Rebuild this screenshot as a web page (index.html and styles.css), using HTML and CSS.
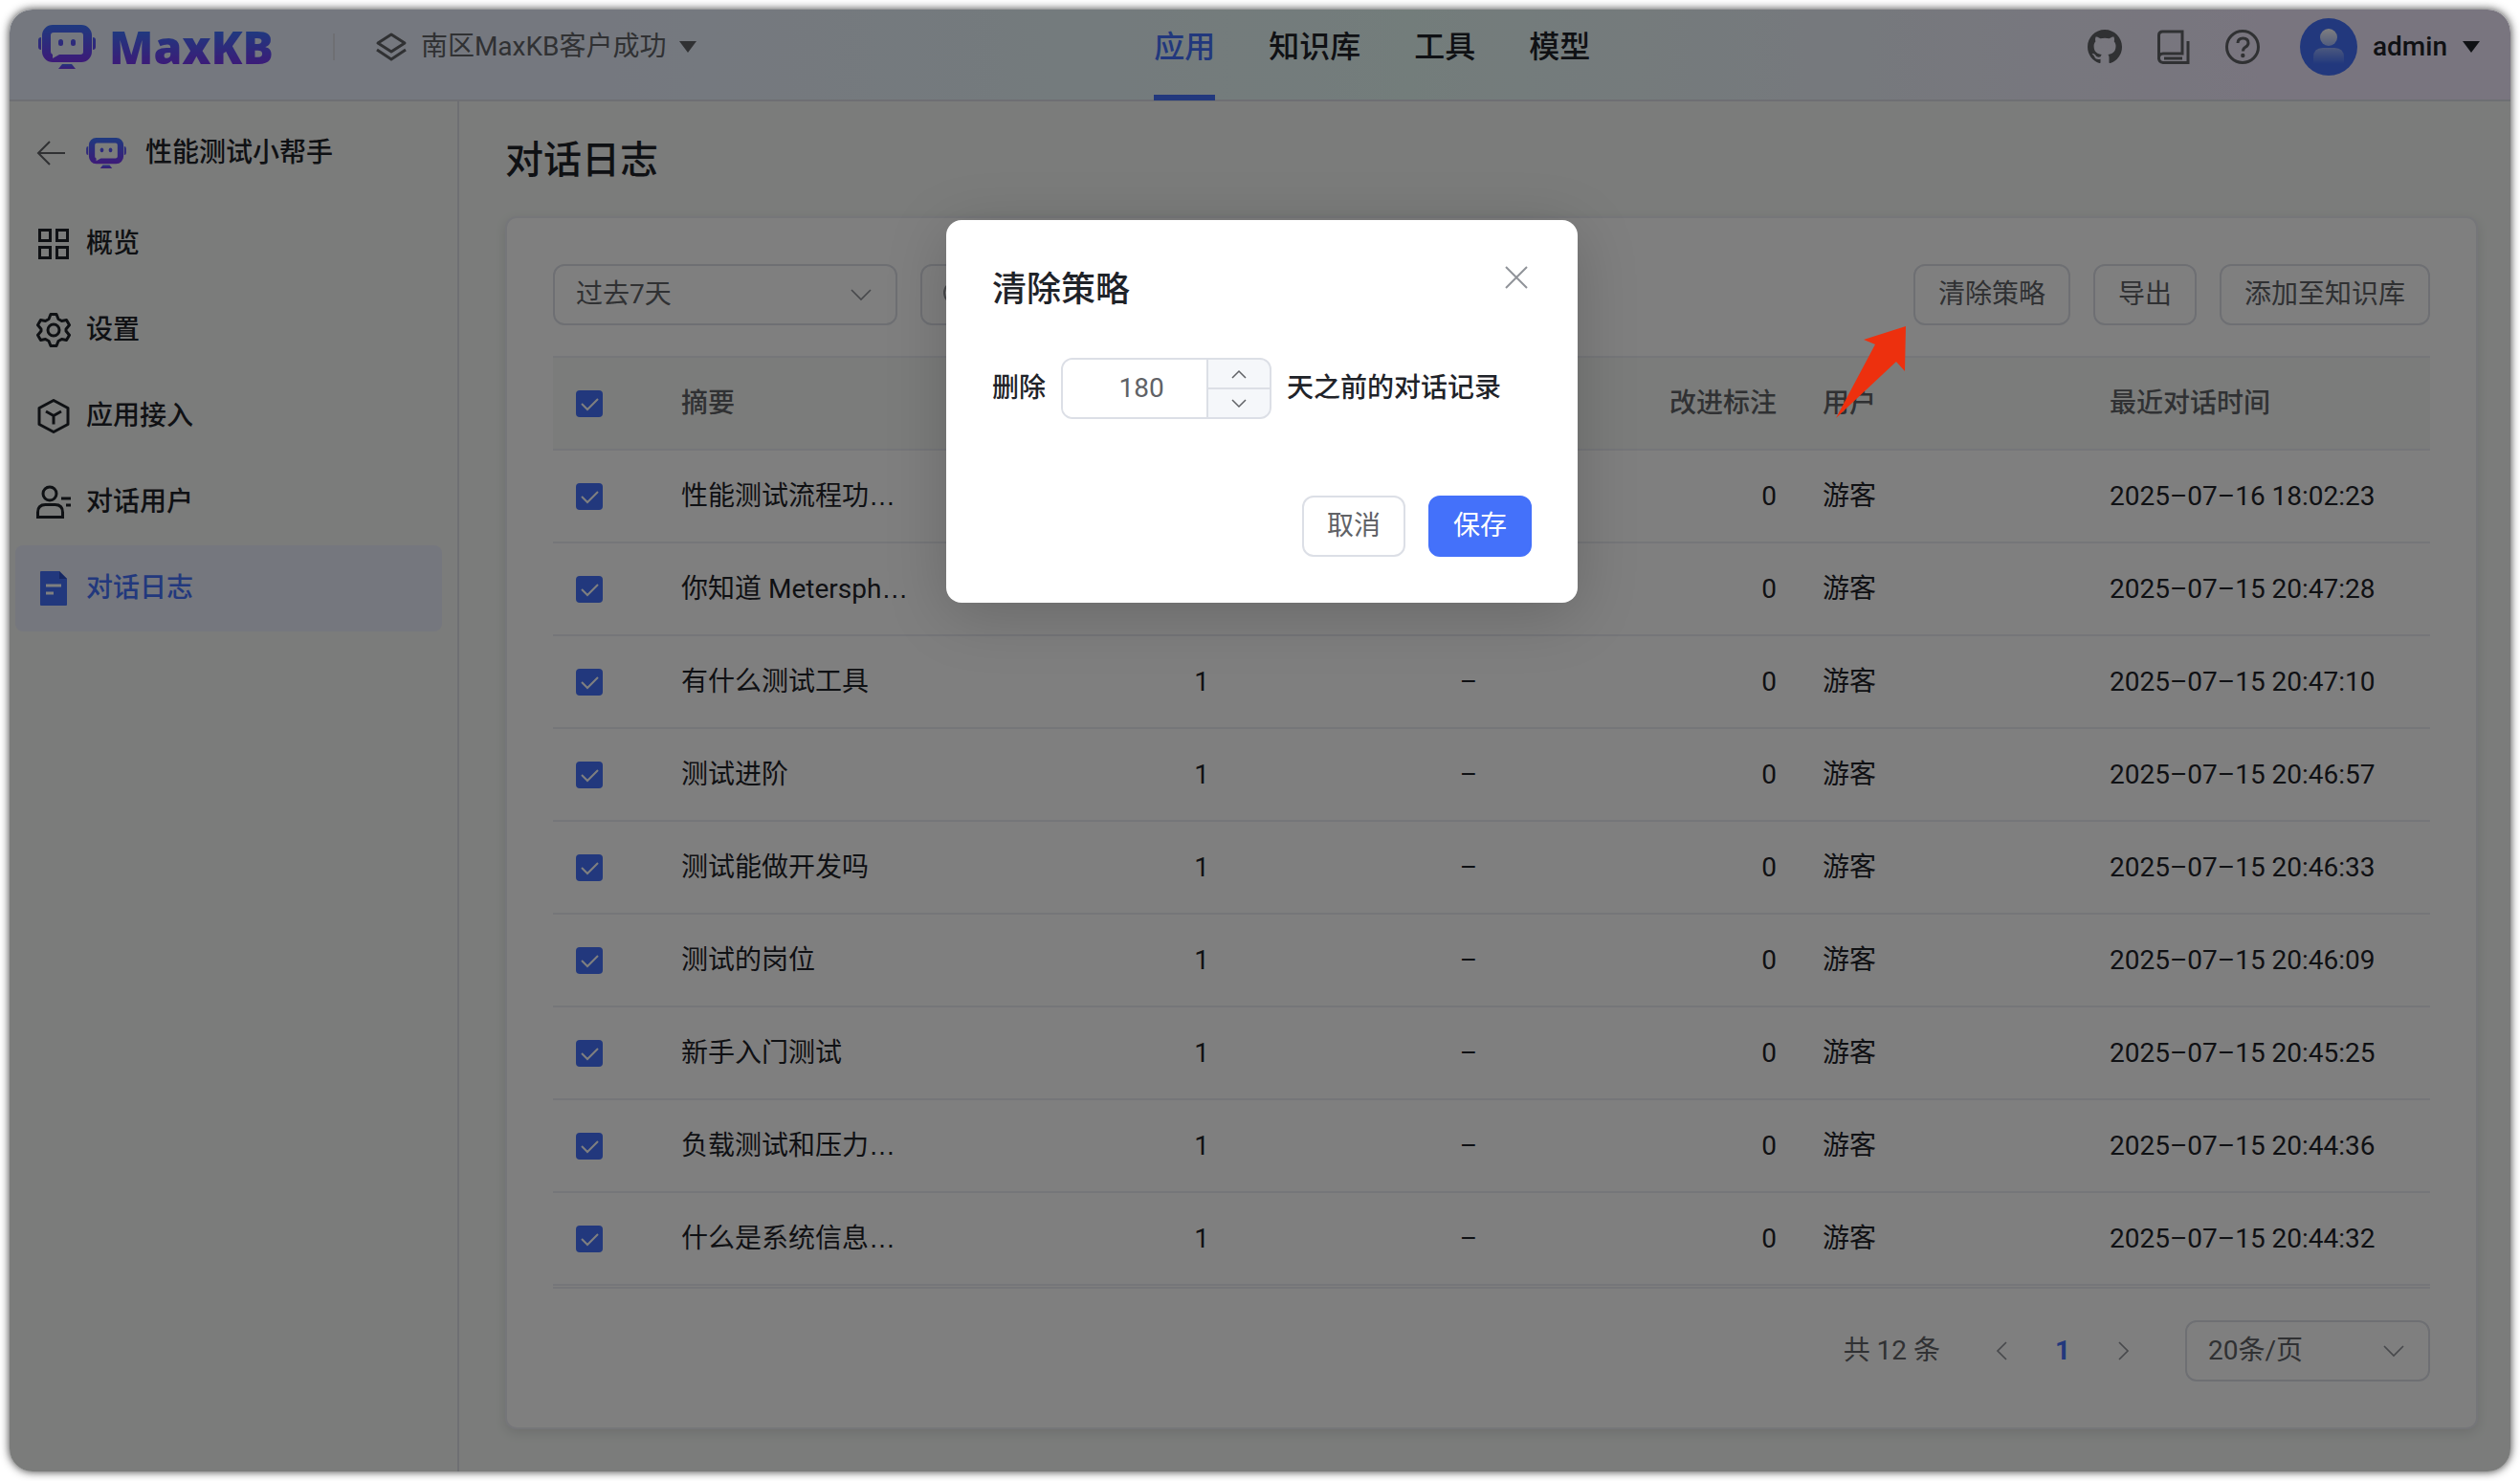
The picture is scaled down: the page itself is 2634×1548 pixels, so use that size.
FILE: index.html
```html
<!DOCTYPE html>
<html lang="zh-CN">
<head>
<meta charset="utf-8">
<title>MaxKB - 对话日志</title>
<link rel="stylesheet" href="styles.css">
</head>
<body>
<svg class="defs" aria-hidden="true">
  <defs>
    <linearGradient id="brand" x1="0" y1="0" x2="0" y2="46" gradientUnits="userSpaceOnUse">
      <stop offset="0" stop-color="#3f74ff"/>
      <stop offset="0.85" stop-color="#7a35f0"/>
    </linearGradient>
    <linearGradient id="base" x1="0" y1="40" x2="0" y2="46" gradientUnits="userSpaceOnUse">
      <stop offset="0" stop-color="#3f74ff"/>
      <stop offset="1" stop-color="#7a35f0"/>
    </linearGradient>
    <linearGradient id="person" x1="0" y1="0" x2="0" y2="1">
      <stop offset="0" stop-color="#fff"/>
      <stop offset="1" stop-color="#fff" stop-opacity="0.5"/>
    </linearGradient>
    <linearGradient id="shoulders" x1="0" y1="0" x2="0" y2="1">
      <stop offset="0" stop-color="#fff" stop-opacity="0.45"/>
      <stop offset="1" stop-color="#fff" stop-opacity="0"/>
    </linearGradient>
    <symbol id="robot" viewBox="0 0 60 46">
      <path fill="url(#brand)" fill-rule="evenodd" d="M15 0h30a11 11 0 0 1 11 11v17a11 11 0 0 1-11 11H15A11 11 0 0 1 4 28V11A11 11 0 0 1 15 0zM16 8q-3 0-3 3v17q0 2 2 3v4l7-4h22q3 0 3-3V11q0-3-3-3z"/>
      <rect fill="url(#brand)" x="21" y="15" width="5" height="7" rx="2.500"/>
      <rect fill="url(#brand)" x="34" y="15" width="5" height="7" rx="2.500"/>
      <path fill="url(#brand)" d="M3 13v13Q0 26 0 23v-7q0-3 3-3zM57 13v13q3 0 3-3v-7q0-3-3-3z"/>
      <path fill="url(#base)" d="M25 41h10l4 5H21z"/>
    </symbol>
    <symbol id="down" viewBox="0 0 24 24">
      <path d="M2 7l10 10L22 7" fill="none" stroke="currentColor" stroke-width="1.700"/>
    </symbol>
  </defs>
</svg>

<div class="window">
  <header class="topbar">
    <div class="topbar-left">
      <a class="brand" href="#"><svg class="brand-icon" aria-hidden="true"><use href="#robot"/></svg><span class="brand-name">MaxKB</span></a>
      <button class="workspace" type="button">
        <svg class="workspace-icon" viewBox="0 0 34 30" fill="none" stroke="currentColor" stroke-width="3" aria-hidden="true"><path d="M17 2L31 11 17 20 3 11z" stroke-linejoin="round"/><path d="M2 18l15 10 15-10"/></svg>
        <span>南区MaxKB客户成功</span>
        <svg class="caret" viewBox="0 0 18 12" aria-hidden="true"><path d="M0 0h18L9 12z" fill="currentColor"/></svg>
      </button>
    </div>
    <nav class="topnav">
      <a class="topnav-link is-active" href="#">应用</a>
      <a class="topnav-link" href="#">知识库</a>
      <a class="topnav-link" href="#">工具</a>
      <a class="topnav-link" href="#">模型</a>
    </nav>
    <div class="topbar-right">
      <a class="tool-link" href="#" aria-label="GitHub"><svg viewBox="0 0 16 16"><path fill="currentColor" d="M8 0C3.580 0 0 3.580 0 8c0 3.540 2.290 6.530 5.470 7.590.4.070.55-.17.55-.38 0-.19-.01-.82-.01-1.490-2.010.37-2.530-.49-2.690-.94-.09-.23-.48-.94-.82-1.130-.28-.15-.68-.52-.01-.53.63-.01 1.080.58 1.230.82.72 1.210 1.870.87 2.330.66.07-.52.28-.87.51-1.070-1.780-.2-3.640-.89-3.640-3.950 0-.87.31-1.590.82-2.150-.08-.2-.36-1.020.08-2.120 0 0 .67-.21 2.200.82.64-.18 1.320-.27 2-.27.68 0 1.360.09 2 .27 1.530-1.040 2.200-.82 2.200-.82.44 1.100.16 1.920.08 2.120.51.56.82 1.270.82 2.150 0 3.070-1.870 3.750-3.650 3.950.29.25.54.73.54 1.480 0 1.070-.01 1.930-.01 2.200 0 .21.15.46.55.38A8.013 8.013 0 0016 8c0-4.420-3.580-8-8-8z"/></svg></a>
      <a class="tool-link" href="#" aria-label="文档"><svg viewBox="0 0 36 36" fill="none" stroke="currentColor" stroke-width="3"><path d="M2.500 31V6q0-4 4-4H27v23H7q-4.500 0-4.500 4.500T7 34.500h26V12"/><path d="M8 30h19"/></svg></a>
      <a class="tool-link" href="#" aria-label="帮助"><svg viewBox="0 0 36 36" fill="none" stroke="currentColor" stroke-width="3"><circle cx="18" cy="18" r="16.500"/><path d="M13 14q0-5 5.500-5t5.500 5q0 2.500-3 4.300-2.500 1.500-2.500 4.200"/><circle cx="18.300" cy="27" r="2.200" fill="currentColor" stroke="none"/></svg></a>
      <button class="account" type="button">
        <svg class="avatar" viewBox="0 0 60 60" aria-hidden="true"><circle cx="30" cy="30" r="30" fill="#4471fa"/><circle cx="30" cy="20" r="9" fill="url(#person)"/><path d="M14 48v-7q0-10 10-10h12q10 0 10 10v7z" fill="url(#shoulders)"/></svg>
        <span>admin</span>
        <svg class="caret" viewBox="0 0 18 12" aria-hidden="true"><path d="M0 0h18L9 12z" fill="currentColor"/></svg>
      </button>
    </div>
  </header>

  <div class="body">
    <aside class="sidebar">
      <div class="app-head">
        <a class="back" href="#" aria-label="返回"><svg viewBox="0 0 30 28" fill="none" stroke="currentColor" stroke-width="2"><path d="M14 2L2 14l12 12M2 14h28"/></svg></a>
        <svg class="app-icon" aria-hidden="true"><use href="#robot"/></svg>
        <span>性能测试小帮手</span>
      </div>
      <nav class="menu">
        <a class="menu-item" href="#"><svg viewBox="0 0 36 36" fill="none" stroke="currentColor" stroke-width="3"><path d="M3.500 3.500h11v11h-11zM21.500 3.500h11v11h-11zM3.500 21.500h11v11h-11zM21.500 21.500h11v11h-11z"/></svg>概览</a>
        <a class="menu-item" href="#"><svg viewBox="0 0 36 36" fill="none" stroke="currentColor" stroke-width="3" stroke-linejoin="round"><path d="M15 1.500h6l2 5 3.500 2 5-1 3 5.300L31 17v2l3.500 4.200-3 5.300-5-1-3.500 2-2 5h-6l-2-5-3.500-2-5 1-3-5.300L5 19v-2l-3.500-4.200 3-5.300 5 1 3.500-2z"/><circle cx="18" cy="18" r="6"/></svg>设置</a>
        <a class="menu-item" href="#"><svg viewBox="0 0 36 36" fill="none" stroke="currentColor" stroke-width="3" stroke-linejoin="round"><path d="M18 1.500L33 9.500v17l-15 8-15-8v-17z"/><path d="M10 13l8 4.500 8-4.500M18 17.500v9"/></svg>应用接入</a>
        <a class="menu-item" href="#"><svg viewBox="0 0 36 36" fill="none" stroke="currentColor" stroke-width="3"><circle cx="14" cy="9" r="7"/><path d="M1.500 33.500v-5q0-8 8-8h10q8 0 8 8v5zM26 14h10M31 21h5"/></svg>对话用户</a>
        <a class="menu-item is-active" href="#"><svg viewBox="0 0 36 36"><path fill="currentColor" d="M5 0h19l8 8v27q0 1-1 1H5q-1 0-1-1V1q0-1 1-1z"/><path fill="#2b4fc4" d="M24 0v8h8z"/><path d="M10 15h16M10 23h8" stroke="#fff" stroke-width="3"/></svg>对话日志</a>
      </nav>
    </aside>

    <main class="main">
      <h1 class="page-title">对话日志</h1>
      <section class="card">
        <div class="toolbar">
          <div class="select range"><select aria-label="时间范围"><option>过去7天</option></select><svg aria-hidden="true"><use href="#down"/></svg></div>
          <label class="search"><svg viewBox="0 0 28 28" fill="none" stroke="currentColor" stroke-width="2" aria-hidden="true"><circle cx="12" cy="12" r="11"/><path d="M20 20l7 7"/></svg><input type="text" aria-label="搜索"></label>
          <div class="actions">
            <button class="btn" type="button">清除策略</button>
            <button class="btn" type="button">导出</button>
            <button class="btn" type="button">添加至知识库</button>
          </div>
        </div>

        <table class="log">
          <colgroup><col class="c-check"><col class="c-summary"><col class="c-count"><col class="c-vote"><col class="c-mark"><col class="c-user"><col></colgroup>
          <thead>
            <tr><th><input type="checkbox" aria-label="全选" checked></th><th>摘要</th><th class="num"></th><th class="num"></th><th class="num">改进标注</th><th>用户</th><th>最近对话时间</th></tr>
          </thead>
          <tbody>
            <tr><td><input type="checkbox" aria-label="选择" checked></td><td>性能测试流程功<span class="more">…</span></td><td class="num">1</td><td class="num">–</td><td class="num">0</td><td>游客</td><td>2025–07–16 18:02:23</td></tr>
            <tr><td><input type="checkbox" aria-label="选择" checked></td><td>你知道 Metersph<span class="more">…</span></td><td class="num">1</td><td class="num">–</td><td class="num">0</td><td>游客</td><td>2025–07–15 20:47:28</td></tr>
            <tr><td><input type="checkbox" aria-label="选择" checked></td><td>有什么测试工具</td><td class="num">1</td><td class="num">–</td><td class="num">0</td><td>游客</td><td>2025–07–15 20:47:10</td></tr>
            <tr><td><input type="checkbox" aria-label="选择" checked></td><td>测试进阶</td><td class="num">1</td><td class="num">–</td><td class="num">0</td><td>游客</td><td>2025–07–15 20:46:57</td></tr>
            <tr><td><input type="checkbox" aria-label="选择" checked></td><td>测试能做开发吗</td><td class="num">1</td><td class="num">–</td><td class="num">0</td><td>游客</td><td>2025–07–15 20:46:33</td></tr>
            <tr><td><input type="checkbox" aria-label="选择" checked></td><td>测试的岗位</td><td class="num">1</td><td class="num">–</td><td class="num">0</td><td>游客</td><td>2025–07–15 20:46:09</td></tr>
            <tr><td><input type="checkbox" aria-label="选择" checked></td><td>新手入门测试</td><td class="num">1</td><td class="num">–</td><td class="num">0</td><td>游客</td><td>2025–07–15 20:45:25</td></tr>
            <tr><td><input type="checkbox" aria-label="选择" checked></td><td>负载测试和压力<span class="more">…</span></td><td class="num">1</td><td class="num">–</td><td class="num">0</td><td>游客</td><td>2025–07–15 20:44:36</td></tr>
            <tr><td><input type="checkbox" aria-label="选择" checked></td><td>什么是系统信息<span class="more">…</span></td><td class="num">1</td><td class="num">–</td><td class="num">0</td><td>游客</td><td>2025–07–15 20:44:32</td></tr>
          </tbody>
        </table>

        <div class="pager">
          <span class="total">共 12 条</span>
          <button class="page-btn" type="button" aria-label="上一页"><svg viewBox="0 0 12 20" fill="none" stroke="currentColor" stroke-width="1.700"><path d="M11 1L2 10l9 9"/></svg></button>
          <button class="page-btn is-current" type="button">1</button>
          <button class="page-btn" type="button" aria-label="下一页"><svg viewBox="0 0 12 20" fill="none" stroke="currentColor" stroke-width="1.700"><path d="M1 1l9 9-9 9"/></svg></button>
          <div class="select page-size"><select aria-label="每页条数"><option>20条/页</option></select><svg aria-hidden="true"><use href="#down"/></svg></div>
        </div>
      </section>
    </main>
  </div>

  <div class="overlay">
    <div class="dialog" role="dialog" aria-modal="true" aria-labelledby="dlg-title">
      <div class="dialog-head">
        <h2 id="dlg-title">清除策略</h2>
        <button class="close" type="button" aria-label="关闭"><svg viewBox="0 0 24 24" fill="none" stroke="currentColor" stroke-width="2"><path d="M1 1l22 22M23 1L1 23"/></svg></button>
      </div>
      <div class="dialog-row">
        <label for="days">删除</label>
        <div class="stepper">
          <input id="days" type="text" value="180">
          <div class="steps">
            <button type="button" aria-label="增加"><svg viewBox="0 0 16 10" fill="none" stroke="currentColor" stroke-width="1.500"><path d="M1 9l7-7 7 7"/></svg></button>
            <button type="button" aria-label="减少"><svg viewBox="0 0 16 10" fill="none" stroke="currentColor" stroke-width="1.500"><path d="M1 1l7 7 7-7"/></svg></button>
          </div>
        </div>
        <span>天之前的对话记录</span>
      </div>
      <div class="dialog-foot">
        <button class="btn" type="button">取消</button>
        <button class="btn btn-primary" type="button">保存</button>
      </div>
    </div>
  </div>

  <svg class="pointer" viewBox="0 0 74 96" aria-hidden="true"><path fill="#ed300e" d="M73 0L29 14l12 5L0 96l63-59 9 10z"/></svg>
</div>
</body>
</html>
```
FILE: styles.css
```css
* { box-sizing: border-box; }

:root {
  --primary: #4471fa;
  --text: #1f2329;
  --text-2: #606266;
  --text-3: #909399;
  --line: #dcdfe6;
  --line-soft: #ebecf3;
  --page: #f6f9f6;
}

body {
  margin: 0;
  padding: 10px;
  background: #fff;
  color: var(--text);
  font: 28px/40px Roboto, "Noto Sans CJK SC", sans-serif;
}

button, input, select { font: inherit; color: inherit; margin: 0; }
button { padding: 0; border: 0; background: none; }
a { color: inherit; text-decoration: none; }
svg { display: block; flex: none; }
.defs { position: absolute; width: 0; height: 0; }

.window {
  position: relative;
  display: flex;
  flex-direction: column;
  min-height: calc(100vh - 20px);
  border-radius: 24px;
  background: var(--page);
  box-shadow: 0 0 10px rgba(0, 0, 0, .8);
}

/* top bar */
.topbar {
  display: flex;
  align-items: flex-start;
  height: 96px;
  padding: 0 32px 0 30px;
  border-bottom: 2px solid var(--line);
  border-radius: 24px 24px 0 0;
  background: linear-gradient(90deg, #ebf1ff 24%, #e7faf7 56%, #f2ebfe 90%);
}
.topbar-left, .topbar-right { display: flex; align-items: center; height: 78px; }
.brand { display: flex; align-items: center; gap: 14px; padding-right: 62px; }
.brand-icon { width: 60px; height: 46px; }
.brand-name {
  font: 800 48px/56px "Open Sans", sans-serif;
  background: linear-gradient(180deg, #3f74ff 20%, #7a35f0 85%);
  -webkit-background-clip: text;
  background-clip: text;
  color: transparent;
}
.workspace {
  display: flex;
  align-items: center;
  gap: 14px;
  height: 28px;
  padding-left: 42px;
  border-left: 2px solid var(--line);
  color: var(--text-2);
}
.workspace-icon { width: 34px; height: 30px; }
.caret { width: 18px; height: 12px; }

.topnav { display: flex; gap: 56px; margin: 0 auto; }
.topnav-link {
  height: 95px;
  padding-bottom: 11px;
  border-bottom: 6px solid transparent;
  font-size: 32px;
  font-weight: 500;
  line-height: 78px;
}
.topnav-link.is-active { color: var(--primary); border-color: var(--primary); }

.topbar-right { gap: 36px; padding-left: 42px; color: var(--text-2); }
.tool-link svg { width: 36px; height: 36px; }
.account { display: flex; align-items: center; gap: 16px; padding-left: 6px; color: var(--text); font-weight: 500; }
.avatar { width: 60px; height: 60px; }

/* body */
.body { display: flex; flex: 1; }
.sidebar { flex: none; width: 470px; border-right: 2px solid var(--line); }
.app-head {
  display: flex;
  align-items: center;
  height: 104px;
  padding: 4px 0 0 28px;
  font-weight: 500;
}
.back { margin-right: 22px; color: var(--text-2); }
.back svg { width: 30px; height: 28px; }
.app-icon { width: 42px; height: 32px; margin-right: 20px; }
.menu { padding: 0 16px 0 6px; }
.menu-item {
  display: flex;
  align-items: center;
  gap: 16px;
  height: 90px;
  padding-left: 22px;
  border-radius: 8px;
  font-weight: 500;
}
.menu-item svg { width: 36px; height: 36px; }
.menu-item.is-active { background: #ebeefc; color: var(--primary); }

.main { flex: 1; min-width: 0; padding: 32px 34px 44px 48px; }
.page-title { margin: 0 0 28px; font-size: 40px; line-height: 60px; font-weight: 500; }
.card {
  padding: 48px;
  border: 2px solid var(--line-soft);
  border-radius: 12px;
  background: #fff;
  box-shadow: 0 4px 12px rgba(31, 35, 41, .12);
}

.toolbar { display: flex; gap: 24px; margin-bottom: 32px; }
.select { display: grid; align-items: center; height: 64px; }
.select > * { grid-area: 1 / 1; }
.select select {
  width: 100%;
  height: 64px;
  padding: 0 22px;
  border: 2px solid var(--line);
  border-radius: 12px;
  background: transparent;
  color: var(--text-2);
  appearance: none;
}
.select svg { justify-self: end; width: 24px; height: 24px; margin-right: 26px; color: var(--text-3); pointer-events: none; }
.range { width: 360px; }
.page-size { width: 256px; margin-left: 32px; }
.search {
  display: flex;
  align-items: center;
  gap: 16px;
  width: 480px;
  height: 64px;
  padding: 0 22px;
  border: 2px solid var(--line);
  border-radius: 12px;
  color: var(--text-3);
}
.search svg { width: 28px; height: 28px; }
.search input { flex: 1; min-width: 0; border: 0; background: none; }
.actions { display: flex; gap: 24px; margin-left: auto; }
.btn {
  height: 64px;
  padding: 0 24px;
  border: 2px solid var(--line);
  border-radius: 12px;
  background: #fff;
  color: var(--text-2);
}
.btn-primary { border-color: var(--primary); background: var(--primary); color: #fff; }

.log {
  width: 100%;
  table-layout: fixed;
  border-spacing: 0;
  border-top: 2px solid var(--line-soft);
  border-bottom: 2px solid var(--line-soft);
  padding-bottom: 1px;
}
.c-check { width: 110px; }
.c-summary { width: 300px; }
.c-count { width: 300px; }
.c-vote { width: 280px; }
.c-mark { width: 313px; }
.c-user { width: 300px; }
.log th, .log td {
  height: 97px;
  padding: 0 24px;
  border-bottom: 2px solid var(--line-soft);
  text-align: left;
  white-space: nowrap;
}
.log th { background: var(--page); color: var(--text-2); font-weight: 500; }
.log .num { text-align: right; }
.more { font-family: "Liberation Sans", sans-serif; }
.log input {
  display: block;
  width: 28px;
  height: 28px;
  border-radius: 4px;
  appearance: none;
  background: var(--primary) url("data:image/svg+xml,%3Csvg xmlns='http://www.w3.org/2000/svg' viewBox='0 0 28 28'%3E%3Cpath d='M6 14l6 6L23 9' fill='none' stroke='white' stroke-width='2'/%3E%3C/svg%3E") center / 28px;
}

.pager { display: flex; align-items: center; justify-content: flex-end; margin-top: 33px; color: var(--text-2); }
.total { margin-right: 32px; }
.page-btn { display: flex; align-items: center; justify-content: center; width: 64px; height: 64px; color: var(--text-3); }
.page-btn svg { width: 12px; height: 20px; }
.page-btn.is-current { color: var(--primary); font-weight: 700; }

/* dialog */
.overlay {
  position: absolute;
  inset: 0;
  display: flex;
  justify-content: center;
  align-items: flex-start;
  padding: 220px 0 0 4px;
  border-radius: 24px;
  background: rgba(0, 0, 0, .5);
}
.dialog {
  width: 660px;
  padding: 48px;
  border-radius: 16px;
  background: #fff;
  box-shadow: 0 12px 64px rgba(0, 0, 0, .18);
}
.dialog-head { display: flex; justify-content: space-between; }
.dialog-head h2 { margin: 0; font-size: 36px; line-height: 50px; font-weight: 500; }
.close { height: 24px; padding-right: 4px; color: var(--text-3); }
.close svg { width: 24px; height: 24px; }
.dialog-row { display: flex; align-items: center; gap: 16px; margin-top: 46px; font-weight: 500; }
.stepper {
  display: flex;
  width: 220px;
  height: 64px;
  border: 2px solid var(--line);
  border-radius: 12px;
  overflow: hidden;
  color: var(--text-2);
}
.stepper input { flex: 1; min-width: 0; padding: 0 0 0 14px; border: 0; text-align: center; font-weight: 400; }
.steps { display: grid; grid-template-rows: 1fr 1fr; gap: 2px; width: 66px; border-left: 2px solid var(--line); background: var(--line); }
.steps button { display: flex; align-items: center; justify-content: center; background: #f5f7fa; }
.steps svg { width: 16px; height: 10px; }
.dialog-foot { display: flex; justify-content: flex-end; gap: 24px; margin-top: 80px; }

/* annotation arrow drawn above the overlay */
.pointer { position: absolute; top: 331px; right: 631px; width: 74px; height: 96px; }
```
